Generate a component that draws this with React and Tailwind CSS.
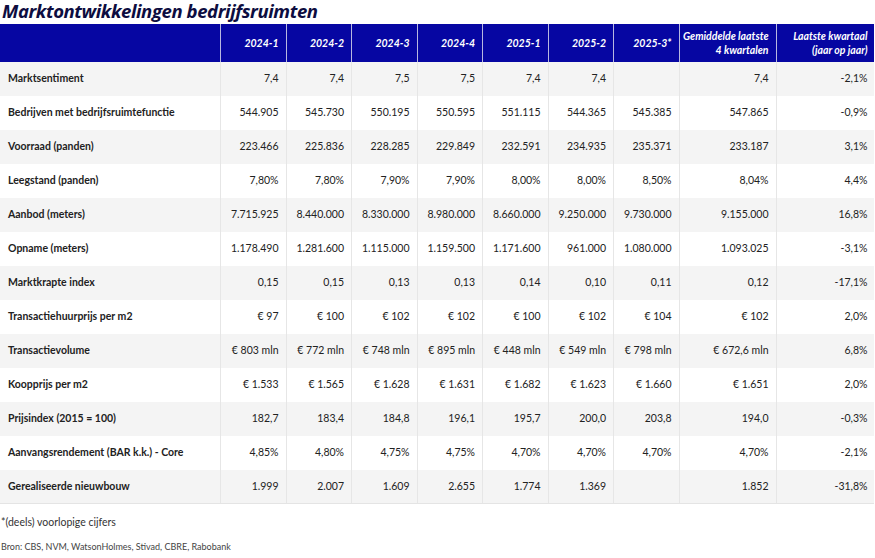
import React from "react";

const headers = ["2024-1", "2024-2", "2024-3", "2024-4", "2025-1", "2025-2", "2025-3*"];

const rows = [
  ["Marktsentiment", "7,4", "7,4", "7,5", "7,5", "7,4", "7,4", "", "7,4", "-2,1%"],
  ["Bedrijven met bedrijfsruimtefunctie", "544.905", "545.730", "550.195", "550.595", "551.115", "544.365", "545.385", "547.865", "-0,9%"],
  ["Voorraad (panden)", "223.466", "225.836", "228.285", "229.849", "232.591", "234.935", "235.371", "233.187", "3,1%"],
  ["Leegstand (panden)", "7,80%", "7,80%", "7,90%", "7,90%", "8,00%", "8,00%", "8,50%", "8,04%", "4,4%"],
  ["Aanbod (meters)", "7.715.925", "8.440.000", "8.330.000", "8.980.000", "8.660.000", "9.250.000", "9.730.000", "9.155.000", "16,8%"],
  ["Opname (meters)", "1.178.490", "1.281.600", "1.115.000", "1.159.500", "1.171.600", "961.000", "1.080.000", "1.093.025", "-3,1%"],
  ["Marktkrapte index", "0,15", "0,15", "0,13", "0,13", "0,14", "0,10", "0,11", "0,12", "-17,1%"],
  ["Transactiehuurprijs per m2", "€ 97", "€ 100", "€ 102", "€ 102", "€ 100", "€ 102", "€ 104", "€ 102", "2,0%"],
  ["Transactievolume", "€ 803 mln", "€ 772 mln", "€ 748 mln", "€ 895 mln", "€ 448 mln", "€ 549 mln", "€ 798 mln", "€ 672,6 mln", "6,8%"],
  ["Koopprijs per m2", "€ 1.533", "€ 1.565", "€ 1.628", "€ 1.631", "€ 1.682", "€ 1.623", "€ 1.660", "€ 1.651", "2,0%"],
  ["Prijsindex (2015 = 100)", "182,7", "183,4", "184,8", "196,1", "195,7", "200,0", "203,8", "194,0", "-0,3%"],
  ["Aanvangsrendement (BAR k.k.) - Core", "4,85%", "4,80%", "4,75%", "4,75%", "4,70%", "4,70%", "4,70%", "4,70%", "-2,1%"],
  ["Gerealiseerde nieuwbouw", "1.999", "2.007", "1.609", "2.655", "1.774", "1.369", "", "1.852", "-31,8%"],
];

const grid = "grid grid-cols-[221px_repeat(7,65.5px)_97px_97px]";

export default function App() {
  return (
    <div className="w-[875px] h-[558px] bg-white text-[#222] overflow-hidden" style={{ fontFamily: "Lato, 'Noto Sans', sans-serif" }}>
      <div className="h-[24px] flex items-start pl-[2px] pt-[1px]">
        <span className="text-[18.5px] leading-[20px] font-bold italic text-[#0d0d40] whitespace-nowrap" style={{ fontFamily: "'Open Sans', 'Noto Sans', sans-serif", letterSpacing: "-0.4px" }}>
          Marktontwikkelingen bedrijfsruimten
        </span>
      </div>
      <div className="w-[874px]">
        <div className={`${grid} h-[38px] bg-[#0606a2] text-white text-[10.5px] leading-[14px] font-bold italic`}>
          <div className="border-r border-[#b8b8e0]" />
          {headers.map((h) => (
            <div key={h} className="flex items-center justify-end pr-[7px] border-r border-[#b8b8e0]">{h}</div>
          ))}
          <div className="flex items-center justify-end text-right pr-[7px] border-r border-[#b8b8e0]">Gemiddelde laatste<br />4 kwartalen</div>
          <div className="flex items-center justify-end text-right pr-[6px]">Laatste kwartaal<br />(jaar op jaar)</div>
        </div>
        {rows.map((r, i) => (
          <div key={i} className={`${grid} h-[34px] text-[10.5px] ${i % 2 === 0 ? "bg-[#f4f4f4]" : "bg-white"} ${i === rows.length - 1 ? "border-b border-[#e4e4e4]" : ""}`}>
            <div className="flex items-center pl-[8px] font-bold border-r border-[#e6e6e6]">{r[0]}</div>
            {r.slice(1).map((v, j) => (
              <div key={j} className={`flex items-center justify-end ${j === 8 ? "pr-[6px]" : "pr-[7px] border-r border-[#e6e6e6]"}`}>{v}</div>
            ))}
          </div>
        ))}
      </div>
      <div className="mt-[11px] pl-[1px] text-[10.5px] text-[#333]">*(deels) voorlopige cijfers</div>
      <div className="mt-[9px] pl-[1px] text-[9px] text-[#444]">Bron: CBS, NVM, WatsonHolmes, Stivad, CBRE, Rabobank</div>
    </div>
  );
}
